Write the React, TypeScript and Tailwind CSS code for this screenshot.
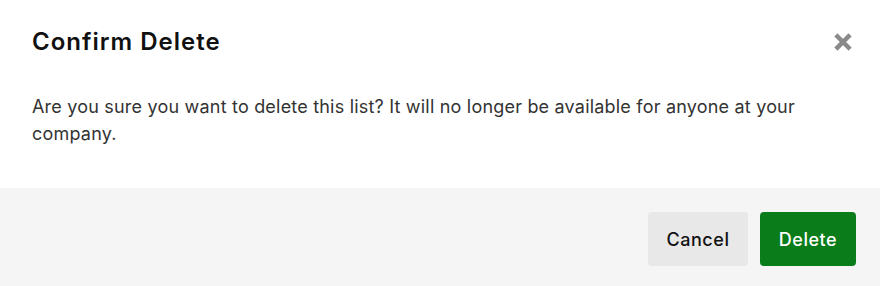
import React from 'react';

export default function App() {
  return (
    <div className="w-[880px] h-[286px] bg-white flex flex-col" style={{ fontFamily: 'Inter, "Liberation Sans", sans-serif' }}>
      <div className="flex items-center justify-between pl-8 pr-[21px] pt-[26px]">
        <h2 className="text-[24px] font-semibold tracking-[1px] text-[#111] leading-8">Confirm Delete</h2>
        <button className="w-8 h-8 flex items-center justify-center text-[#8a8a8a]">
          <svg width="18" height="18" viewBox="0 0 18 18">
            <path d="M3.5 3.5 L14.5 14.5 M14.5 3.5 L3.5 14.5" stroke="currentColor" strokeWidth="4.5" strokeLinecap="square" />
          </svg>
        </button>
      </div>
      <p className="pl-8 pr-12 pt-[35px] text-[18px] tracking-[0.2px] leading-[27px] text-[#333]">
        Are you sure you want to delete this list? It will no longer be available for anyone at your company.
      </p>
      <div className="mt-auto h-[98px] bg-[#f5f5f5] flex justify-end items-start gap-3 px-6 pt-6">
        <button className="w-[100px] h-[54px] rounded bg-[#e8e8e8] text-[#111] text-[18px] tracking-[0.03em] font-medium">Cancel</button>
        <button className="w-[96px] h-[54px] rounded bg-[#0a7c1a] text-white text-[18px] tracking-[0.03em] font-medium">Delete</button>
      </div>
    </div>
  );
}
